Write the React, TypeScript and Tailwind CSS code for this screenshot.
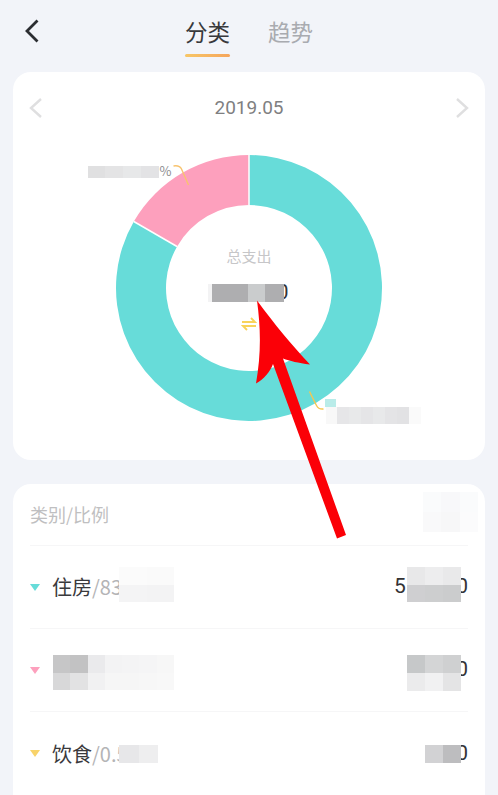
import type { ReactNode } from "react";

function polar(r: number, deg: number) {
  const a = ((deg - 90) * Math.PI) / 180;
  return [133 + r * Math.cos(a), 133 + r * Math.sin(a)];
}
function arc(start: number, end: number) {
  const [a, b] = polar(133, start);
  const [c, d] = polar(133, end);
  const [e, f] = polar(83, end);
  const [g, h] = polar(83, start);
  const large = end - start > 180 ? 1 : 0;
  return `M${a} ${b}A133 133 0 ${large} 1 ${c} ${d}L${e} ${f}A83 83 0 ${large} 0 ${g} ${h}Z`;
}

function Mosaic({ className, rows }: { className: string; rows: string[][] }) {
  return (
    <div className={`flex shrink-0 flex-col ${className}`}>
      {rows.map((r, i) => (
        <div key={i} className="flex flex-1">
          {r.map((c, j) => (
            <div key={j} className={`flex-1 ${c}`} />
          ))}
        </div>
      ))}
    </div>
  );
}

function Chevron({ right }: { right?: boolean }) {
  return (
    <svg width="16" height="22" viewBox="0 0 16 22" fill="none" className="text-[#dfdfe0]">
      <path d={right ? "M3 2l10 9-10 9" : "M13 2L3 11l10 9"} stroke="currentColor" strokeWidth="2.4" />
    </svg>
  );
}

/* A digit cut off by the censoring block next to it */
function Clipped({ children, width }: { children: ReactNode; width: string }) {
  return (
    <span className={`flex shrink-0 justify-end overflow-hidden font-['Roboto',sans-serif] text-[21px] text-[#333335] ${width}`}>
      {children}
    </span>
  );
}

function Row({ tri, left, right, last }: { tri: string; left: ReactNode; right: ReactNode; last?: boolean }) {
  return (
    <div className={`flex h-[83px] items-center ${last ? "" : "border-b border-[#f6f6f7]"}`}>
      <svg width="10" height="7" viewBox="0 0 10 7" className={`mr-[12px] shrink-0 ${tri}`}>
        <path d="M0 0h10L5 7z" fill="currentColor" />
      </svg>
      {left}
      <div className="ml-auto flex items-center">{right}</div>
    </div>
  );
}

function Name({ name, pct }: { name: string; pct: string }) {
  return (
    <span className="w-[67px] shrink-0 overflow-hidden whitespace-nowrap text-[20px]">
      <span className="text-[#3a3a3c]">{name}</span>
      <span className="text-[#b4b4b6]">{pct}</span>
    </span>
  );
}

export default function App() {
  return (
    <div className="relative h-[795px] w-[498px] overflow-hidden bg-[#f2f4f9] px-[13px] font-['Noto_Sans_CJK_SC','Noto_Sans',sans-serif]">
      <header className="grid h-[72px] grid-cols-[1fr_auto_1fr] items-start pt-[15px]">
        <svg width="16" height="26" viewBox="0 0 16 26" fill="none" className="ml-[11px] mt-[3px] text-[#2b2d31]">
          <path d="M13.5 2.500L3 13l10.500 10.500" stroke="currentColor" strokeWidth="2.8" />
        </svg>
        <div className="flex items-start gap-[38px]">
          <div className="flex flex-col items-center">
            <span className="text-[22.5px] leading-[33px] text-[#38393c]">分类</span>
            <span className="mt-[6px] h-[3px] w-[45px] rounded-full bg-gradient-to-r from-[#f7c667] to-[#f5a55c]" />
          </div>
          <span className="text-[22.5px] leading-[33px] text-[#a9abb0]">趋势</span>
        </div>
      </header>

      <section className="h-[388px] rounded-[18px] bg-white">
        <div className="flex h-[72px] items-center justify-between px-[15px]">
          <Chevron />
          <span className="font-['Roboto',sans-serif] text-[19px] text-[#7f7f81]">2019.05</span>
          <Chevron right />
        </div>

        <div className="relative mx-auto mt-[10.5px] flex h-[266px] w-[266px] flex-col items-center pt-[90px]">
          <svg width="266" height="266" viewBox="0 0 266 266" fill="none" className="absolute inset-0 overflow-visible">
            <path d={arc(0, 300)} fill="#67dcd9" />
            <path d={arc(300, 360)} fill="#fda0bd" />
            <path d="M133 0v50" stroke="#fff" strokeWidth="1.5" />
            <path d="M17.800 66.500L61 91.500" stroke="#fff" strokeWidth="1.5" />
            <path d="M57.500 11q6-1 8 3l7 16" stroke="#f8c36e" strokeWidth="1.4" />
            <path d="M193.500 236.500l7 14q2 4 7 3.500" stroke="#f6c64f" strokeWidth="1.4" />
          </svg>

          <span className="relative text-[15px] leading-[22px] text-[#c6c6c8]">总支出</span>
          <div className="relative -ml-[2px] mt-[17px] flex h-[18px] items-center">
            <div className="h-full w-[4px] bg-[#f3f3f4]" />
            <div className="h-full w-[36px] bg-[#aeaeb0]" />
            <div className="h-full w-[17px] bg-[#cacccd]" />
            <div className="h-full w-[19px] bg-[#aeaeb0]" />
            <Clipped width="w-[5px]">0</Clipped>
          </div>
          <svg width="16" height="16" viewBox="0 0 16 16" fill="none" className="relative mt-[14px] text-[#f8d35a]">
            <path d="M1 6h13L10 2M15 10H2l4 4" stroke="currentColor" strokeWidth="1.9" />
          </svg>

          <div className="absolute left-[-28.5px] top-[9.5px] flex items-end">
            <Mosaic className="h-[12px] w-[71px]" rows={[["bg-[#e0e0e1]", "bg-[#e4e4e5]", "bg-[#e7e8e9]", "bg-[#e3e3e5]"]]} />
            <span className="ml-[1px] text-[13px] leading-[14px] text-[#8d8d8f]">%</span>
          </div>
          <div className="absolute left-[208.500px] top-[244.5px] h-[8px] w-[11px] bg-[#b9ece9]" />
          <Mosaic
            className="absolute left-[209.5px] top-[252.5px] h-[17px] w-[95px]"
            rows={[["bg-[#f8f8f8]", "bg-[#e6e6e8]", "bg-[#e8e9ea]", "bg-[#e5e5e7]", "bg-[#e8e9ea]", "bg-[#e4e4e6]", "bg-[#e2e2e4]", "bg-[#fafafa]"]]}
          />
        </div>
      </section>

      <section className="relative mt-[24px] h-[330px] rounded-[18px] bg-white px-[17px]">
        <div className="flex h-[62px] items-center border-b border-[#f6f6f7] text-[18px] text-[#bfbfc1]">类别/比例</div>
        <Row
          tri="text-[#67dcd9]"
          left={
            <>
              <Name name="住房" pct="/83" />
              <Mosaic className="mb-[5px] h-[35px] w-[55px]" rows={[["bg-[#fbfbfb]", "bg-[#fafafa]"], ["bg-[#f4f4f5]", "bg-[#f3f3f4]"]]} />
            </>
          }
          right={
            <>
              <Clipped width="w-[13px] justify-start">5</Clipped>
              <Mosaic className="mb-[5px] h-[35px] w-[54px]" rows={[["bg-[#e8e8e9]", "bg-[#ededee]", "bg-[#e9e9ea]"], ["bg-[#cfcfd1]", "bg-[#cdcecf]", "bg-[#cbcccd]"]]} />
              <Clipped width="w-[7px]">0</Clipped>
            </>
          }
        />
        <Row
          tri="text-[#fda0bd]"
          left={
            <Mosaic
              className="ml-[1px] mt-[5px] h-[35px] w-[121px]"
              rows={[
                ["bg-[#c6c6c7]", "bg-[#c2c2c3]", "bg-[#eaeaec]", "bg-[#f3f3f4]", "bg-[#f4f4f5]", "bg-[#f5f5f6]", "bg-[#f7f7f7]"],
                ["bg-[#d8d8d9]", "bg-[#e2e2e3]", "bg-[#f1f1f2]", "bg-[#f6f6f6]", "bg-[#f6f6f6]", "bg-[#f7f7f7]", "bg-[#f8f8f8]"],
              ]}
            />
          }
          right={
            <>
              <Mosaic className="mt-[5px] h-[36px] w-[54px]" rows={[["bg-[#c6c8c9]", "bg-[#d4d5d6]", "bg-[#cfd0d1]"], ["bg-[#ebebec]", "bg-[#f1f1f2]", "bg-[#e4e4e5]"]]} />
              <Clipped width="w-[7px]">0</Clipped>
            </>
          }
        />
        <Row
          last
          tri="text-[#f8d36a]"
          left={
            <>
              <Name name="饮食" pct="/0.5" />
              <Mosaic className="h-[18px] w-[39px]" rows={[["bg-[#e7e7e9]", "bg-[#eeeeef]"]]} />
            </>
          }
          right={
            <>
              <Mosaic className="h-[18px] w-[36px]" rows={[["bg-[#d2d2d4]", "bg-[#bdbdbf]"]]} />
              <Clipped width="w-[7px]">0</Clipped>
            </>
          }
        />
        <Mosaic
          className="absolute right-[7px] top-[8px] h-[40px] w-[55px] opacity-60"
          rows={[["bg-[#f8f9fb]", "bg-[#f4f5f7]", "bg-[#f8f9fb]"], ["bg-[#f6f6f8]", "bg-[#f3f3f5]", "bg-[#f9fafb]"]]}
        />
      </section>

      {/* red annotation arrow drawn over the page */}
      <svg width="498" height="795" viewBox="0 0 498 795" className="pointer-events-none absolute inset-0">
        <path
          d="M257 300.500C275 325 292 345 310 364.500C298 363 290 361 283 358.500L346 535L337 538.500L273 364C270 372 264 379 256 383.500C261 355 261 330 257 300.500Z"
          fill="#fb0007"
        />
      </svg>
    </div>
  );
}
